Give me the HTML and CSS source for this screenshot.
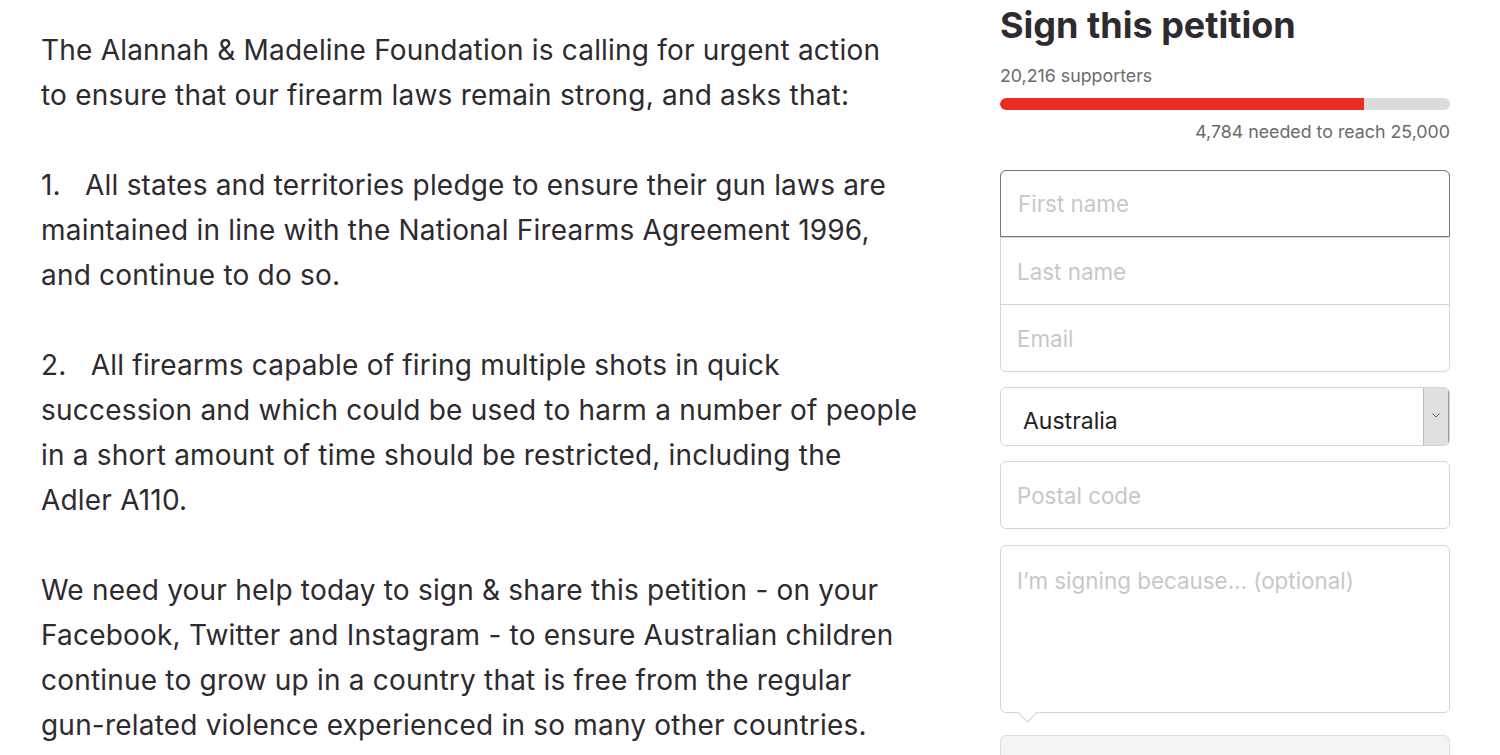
FILE: index.html
```html
<!DOCTYPE html>
<html>
<head>
<meta charset="utf-8">
<link rel="stylesheet" href="styles.css">
</head>
<body>
<div class="page">
  <div class="story">
    <p>The Alannah &amp; Madeline Foundation is calling for urgent action<br>to ensure that our firearm laws remain strong, and asks that:</p>
    <p>1.&nbsp;&nbsp; All states and territories pledge to ensure their gun laws are<br>maintained in line with the National Firearms Agreement 1996,<br>and continue to do so.</p>
    <p>2.&nbsp;&nbsp; All firearms capable of firing multiple shots in quick<br>succession and which could be used to harm a number of people<br>in a short amount of time should be restricted, including the<br>Adler A110.</p>
    <p>We need your help today to sign &amp; share this petition - on your<br>Facebook, Twitter and Instagram - to ensure Australian children<br>continue to grow up in a country that is free from the regular<br>gun-related violence experienced in so many other countries.</p>
  </div>
  <aside class="sign">
    <h2 class="title">Sign this petition</h2>
    <div class="count">20,216 supporters</div>
    <div class="bar"><div class="fill" style="width:80.86%"></div></div>
    <div class="needed">4,784 needed to reach 25,000</div>
    <div class="group">
      <div class="field focus">First name</div>
      <div class="field">Last name</div>
      <div class="field">Email</div>
    </div>
    <div class="select">
      <span class="val">Australia</span>
      <span class="arrow"><svg width="8" height="5" viewBox="0 0 8 5"><path d="M0.5 0.5 L4 4 L7.5 0.5" fill="none" stroke="#666" stroke-width="1"/></svg></span>
    </div>
    <div class="box">Postal code</div>
    <div class="textarea">I’m signing because... (optional)</div>
    <div class="bottom"></div>
  </aside>
</div>
</body>
</html>
```

FILE: styles.css
```css
html, body { margin: 0; padding: 0; background: #fff; }
body { font-family: "Inter", "Roboto", "Liberation Sans", sans-serif; color: #333; overflow: hidden; height: 755px; }
.page { display: flex; padding: 0 0 0 41px; }
.story { width: 880px; flex: none; padding-top: 28px; }
.story p {
  margin: 0 0 45px 0;
  font-size: 28px;
  line-height: 45px;
  letter-spacing: 0.2px;
  white-space: nowrap;
  color: #2e2a2f;
}
.sign { margin-left: 79px; width: 450px; flex: none; padding-top: 2px; }
.title { margin: 0; font-size: 36px; font-weight: 700; color: #2e2a2f; line-height: 46px; letter-spacing: 0; }
.count { margin-top: 18px; font-size: 17.8px; color: #6b6b6b; line-height: 20px; }
.bar { margin-top: 12px; height: 12px; background: #dcdadc; border-radius: 6px; overflow: hidden; }
.fill { height: 100%; background: #ec2c22; border-radius: 6px 0 0 6px; }
.needed { margin-top: 12px; text-align: right; font-size: 17.8px; color: #6b6b6b; line-height: 20px; }
.group { margin-top: 28px; border: 1px solid #d6d6d6; border-radius: 6px; }
.field {
  height: 67px; box-sizing: border-box; padding: 0 16px;
  display: flex; align-items: center;
  font-size: 22.4px; color: #c8c8c8;
  border-top: 1px solid #d6d6d6;
}
.field:first-child { border-top: none; }
.field.focus { margin: -1px -1px 0 -1px; border: 1px solid #767676; border-radius: 6px 6px 0 0; height: 67px; padding-left: 17px; }
.select {
  margin-top: 15px; height: 59px; box-sizing: border-box;
  border: 1px solid #d6d6d6; border-radius: 6px;
  display: flex; align-items: stretch; overflow: hidden;
}
.select .val { flex: 1; display: flex; align-items: center; padding: 8px 0 0 22px; font-size: 23px; color: #222; }
.select .arrow { width: 26px; background: #e0e0e0; border-left: 1px solid #bdbdbd; display: flex; align-items: flex-start; justify-content: center; padding-top: 25px; box-sizing: border-box; border-right: 1px solid #999; }
.box {
  margin-top: 15px; height: 68px; box-sizing: border-box;
  border: 1px solid #d6d6d6; border-radius: 6px;
  padding: 0 16px; display: flex; align-items: center;
  font-size: 22.4px; color: #c8c8c8;
}
.textarea {
  position: relative;
  margin-top: 16px; height: 168px; box-sizing: border-box;
  border: 1px solid #d6d6d6; border-radius: 6px;
  padding: 21px 16px; font-size: 22.4px; color: #c8c8c8;
}
.textarea::after {
  content: ""; position: absolute; left: 20px; bottom: -8px;
  width: 12px; height: 12px; background: #fff;
  border-right: 1px solid #d6d6d6; border-bottom: 1px solid #d6d6d6;
  transform: rotate(45deg);
}
.bottom { margin-top: 22px; height: 60px; background: #f4f3f5; border: 1px solid #dedde0; border-radius: 6px; }
```
